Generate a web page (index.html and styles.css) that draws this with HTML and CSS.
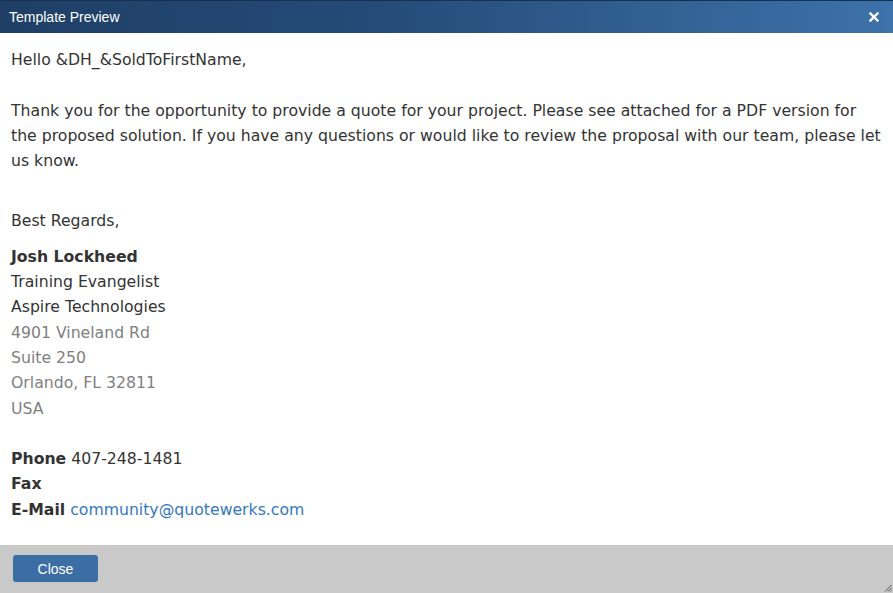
FILE: index.html
```html
<!DOCTYPE html>
<html>
<head>
<meta charset="utf-8">
<link rel="stylesheet" href="styles.css">
</head>
<body>
<div class="dialog">
  <div class="titlebar">
    <span class="title">Template Preview</span>
    <span class="close-x">
      <svg width="10" height="10" viewBox="0 0 10 10"><path d="M1.5 1.5 L8.5 8.5 M8.5 1.5 L1.5 8.5" stroke="#fff" stroke-width="2.4" stroke-linecap="square"/></svg>
    </span>
  </div>
  <div class="content">
    <p class="line">Hello &amp;DH_&amp;SoldToFirstName,</p>
    <p class="line blank">&nbsp;</p>
    <p class="para">Thank you for the opportunity to provide a quote for your project. Please see attached for a PDF version for the proposed solution. If you have any questions or would like to review the proposal with our team, please let us know.</p>
    <p class="line regards">Best Regards,</p>
    <div class="signature">
      <div class="line"><b>Josh Lockheed</b></div>
      <div class="line">Training Evangelist</div>
      <div class="line">Aspire Technologies</div>
      <div class="line muted">4901 Vineland Rd</div>
      <div class="line muted">Suite 250</div>
      <div class="line muted">Orlando, FL 32811</div>
      <div class="line muted">USA</div>
      <div class="line">&nbsp;</div>
      <div class="line"><b>Phone</b> 407-248-1481</div>
      <div class="line"><b>Fax</b></div>
      <div class="line"><b>E-Mail</b> <a class="link" href="#">community@quotewerks.com</a></div>
    </div>
  </div>
  <div class="footer">
    <button class="btn">Close</button>
    <span class="grip">
      <svg width="8" height="8" viewBox="0 0 8 8"><path d="M7.5 1 L1 7.5 M7.5 4 L4 7.5 M7.5 6.5 L6.5 7.5" stroke="#555" stroke-width="1"/></svg>
    </span>
  </div>
</div>
</body>
</html>
```
FILE: styles.css
```css
html, body {
  margin: 0;
  padding: 0;
  background: #fff;
}
.dialog {
  width: 893px;
  height: 593px;
  display: flex;
  flex-direction: column;
  overflow: hidden;
}
.titlebar {
  height: 33px;
  flex: none;
  display: flex;
  align-items: center;
  justify-content: space-between;
  padding: 0 14px 1px 9px;
  box-sizing: border-box;
  background: linear-gradient(to right, #1f3f66 0%, #244a76 40%, #3d72aa 100%);
  border-top: 1px solid #163152;
}
.title {
  color: #fff;
  font-family: "Liberation Sans", Arial, sans-serif;
  font-size: 14px;
}
.close-x {
  display: flex;
  width: 10px;
  height: 10px;
}
.content {
  flex: 1;
  padding: 14px 11px 0 11px;
  font-family: "DejaVu Sans", sans-serif;
  font-size: 15.7px;
  color: #333;
  line-height: 25.3px;
}
.content p {
  margin: 0;
}
.regards {
  margin-top: 35px !important;
}
.signature {
  margin-top: 10px;
}
.muted {
  color: #808080;
}
.link {
  color: #3578c0;
  text-decoration: none;
}
.content b {
  font-weight: bold;
}
.footer {
  height: 48px;
  flex: none;
  background: #c9c9c9;
  display: flex;
  align-items: flex-start;
  padding: 10px 0 0 13px;
  box-sizing: border-box;
  position: relative;
}
.btn {
  width: 85px;
  height: 27px;
  background: #3a6ea5;
  color: #fff;
  border: none;
  border-radius: 3px;
  font-family: "Liberation Sans", Arial, sans-serif;
  font-size: 14px;
  padding: 0;
}
.grip {
  position: absolute;
  right: 1px;
  bottom: 1px;
  display: flex;
}
```
